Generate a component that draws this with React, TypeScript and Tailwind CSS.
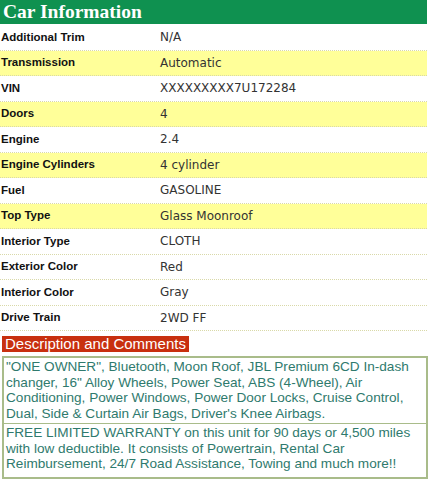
import React from "react";

const rows: [string, string, boolean][] = [
  ["Additional Trim", "N/A", false],
  ["Transmission", "Automatic", true],
  ["VIN", "XXXXXXXXX7U172284", false],
  ["Doors", "4", true],
  ["Engine", "2.4", false],
  ["Engine Cylinders", "4 cylinder", true],
  ["Fuel", "GASOLINE", false],
  ["Top Type", "Glass Moonroof", true],
  ["Interior Type", "CLOTH", false],
  ["Exterior Color", "Red", false],
  ["Interior Color", "Gray", false],
  ["Drive Train", "2WD FF", false],
];

export default function App() {
  return (
    <div className="w-[430px] h-[480px] bg-white overflow-hidden">
      <div className="w-[427px] h-[24px] bg-[#0f9150] flex items-center pl-[3px]">
        <span className="text-white font-bold text-[19.5px] leading-none" style={{ fontFamily: '"Liberation Serif", serif' }}>
          Car Information
        </span>
      </div>
      <div className="w-[427px] pt-[1px]">
        {rows.map(([l, v, y]) => (
          <div
            key={l}
            className={`flex items-center h-[25.5px] border-b border-dotted border-[#d9d9a8] ${y ? "bg-[#ffff99]" : "bg-white"}`}
          >
            <div className="w-[160px] pl-[1px] font-bold text-[11.5px] text-[#111]" style={{ fontFamily: '"Liberation Sans", Arial, sans-serif' }}>
              {l}
            </div>
            <div className="text-[12px] text-[#333]" style={{ fontFamily: '"DejaVu Sans", Verdana, sans-serif' }}>
              {v}
            </div>
          </div>
        ))}
      </div>
      <div className="mt-[1px] ml-[2px] inline-block bg-[#c8300f] text-white text-[15px] leading-[16px] px-[3px]" style={{ fontFamily: '"Liberation Sans", Arial, sans-serif' }}>
        Description and Comments
      </div>
      <div
        className="mt-[1px] ml-[2px] w-[426px] border-2 border-[#a9bc8a] text-[#2f7a6d] text-[13.6px] leading-[15.5px]"
        style={{ fontFamily: '"Liberation Sans", Arial, sans-serif' }}
      >
        <div className="px-[2px] pt-[1px] pb-[2px] border-b border-[#a9bc8a]">
          "ONE OWNER", Bluetooth, Moon Roof, JBL Premium 6CD In-dash changer, 16" Alloy Wheels, Power Seat, ABS (4-Wheel), Air Conditioning, Power Windows, Power Door Locks, Cruise Control, Dual, Side &amp; Curtain Air Bags, Driver's Knee Airbags.
        </div>
        <div className="px-[2px] pt-[1px] pb-[5px]">
          FREE LIMITED WARRANTY on this unit for 90 days or 4,500 miles with low deductible. It consists of Powertrain, Rental Car Reimbursement, 24/7 Road Assistance, Towing and much more!!
        </div>
      </div>
    </div>
  );
}
